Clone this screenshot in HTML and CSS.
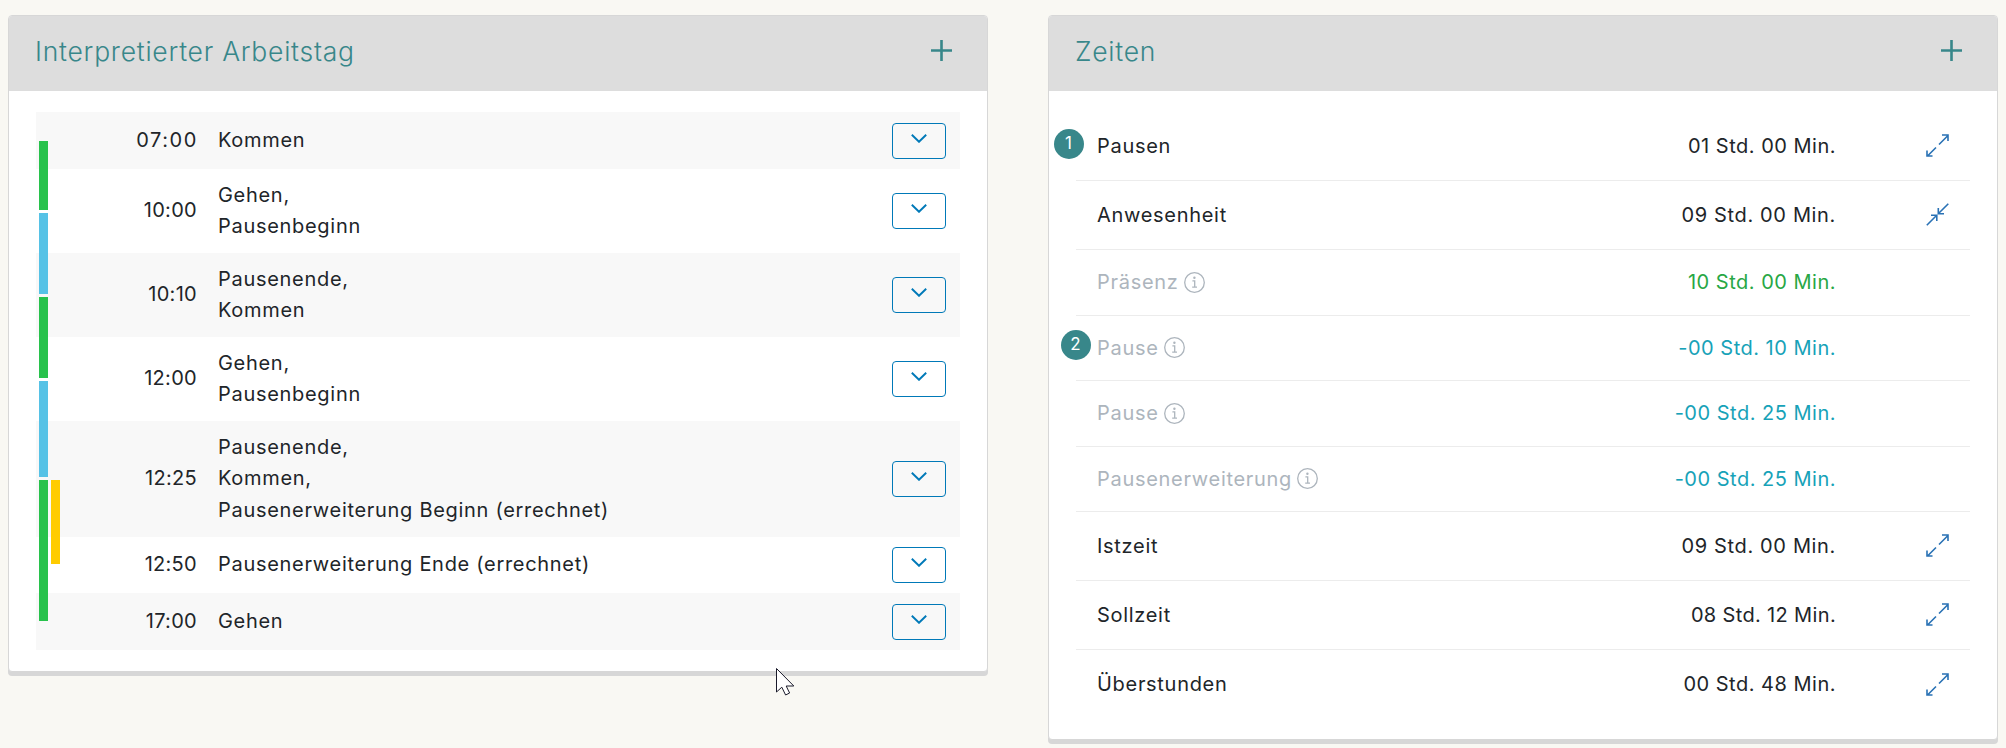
FILE: index.html
```html
<!DOCTYPE html>
<html lang="de">
  <head>
    <meta charset="UTF-8" />
    <meta name="viewport" content="width=device-width, initial-scale=1.0" />
    <title>Arbeitstag</title>
    <link rel="stylesheet" href="styles.css">
  </head>
  <body>
    <svg class="defs">
      <symbol id="plus" viewBox="0 0 21 21">
        <path d="M10.5 0v21M0 10.5h21" />
      </symbol>
      <symbol id="chevron" viewBox="0 0 16 9">
        <path d="M0.8 0.8L8 7.8L15.2 0.8" />
      </symbol>
      <symbol id="expand" viewBox="0 0 23 23">
        <path d="M13 10.5L21.5 2M16 1H22V7M10 13.5L1.5 22M1 16.5V22H6.5" />
      </symbol>
      <symbol id="collapse" viewBox="0 0 23 23">
        <path d="M22.3 0.7L13 10M12.3 5V10.7H18M0.8 22.2L10 13M5 12.3H10.8V18" />
      </symbol>
      <symbol id="info" viewBox="0 0 21 21">
        <circle cx="10.5" cy="10.5" r="9.8" />
        <path d="M8.4 8.9H10.7V15M8.2 15.1H13" />
        <circle class="dot" cx="10.4" cy="5.7" r="1.2" />
      </symbol>
    </svg>

    <div class="page">
      <section class="card day">
        <header class="card-header">
          <h2>Interpretierter Arbeitstag</h2>
          <svg class="plus"><use href="#plus" /></svg>
        </header>
        <div class="card-body">
          <div class="entries">
            <div class="entry">
              <span class="time wide">07:00</span>
              <p>Kommen</p>
              <button><svg><use href="#chevron" /></svg></button>
            </div>
            <div class="entry double">
              <span class="time">10:00</span>
              <p>Gehen,<br />Pausenbeginn</p>
              <button><svg><use href="#chevron" /></svg></button>
            </div>
            <div class="entry double">
              <span class="time">10:10</span>
              <p>Pausenende,<br />Kommen</p>
              <button><svg><use href="#chevron" /></svg></button>
            </div>
            <div class="entry double">
              <span class="time">12:00</span>
              <p>Gehen,<br />Pausenbeginn</p>
              <button><svg><use href="#chevron" /></svg></button>
            </div>
            <div class="entry triple">
              <span class="time">12:25</span>
              <p>Pausenende,<br />Kommen,<br />Pausenerweiterung Beginn (errechnet)</p>
              <button><svg><use href="#chevron" /></svg></button>
            </div>
            <div class="entry short">
              <span class="time">12:50</span>
              <p>Pausenerweiterung Ende (errechnet)</p>
              <button><svg><use href="#chevron" /></svg></button>
            </div>
            <div class="entry">
              <span class="time">17:00</span>
              <p>Gehen</p>
              <button><svg><use href="#chevron" /></svg></button>
            </div>

            <!-- coloured bars running over the rows -->
            <div class="bars">
              <div class="bar work" style="height: 69px"></div>
              <div class="bar pause" style="height: 81px"></div>
              <div class="bar work" style="height: 81px"></div>
              <div class="bar pause" style="height: 96px"></div>
              <div class="bar work" style="height: 141px"></div>
            </div>
            <div class="bar extension"></div>
          </div>
        </div>
      </section>

      <section class="card times">
        <header class="card-header">
          <h2>Zeiten</h2>
          <svg class="plus"><use href="#plus" /></svg>
        </header>
        <div class="card-body">
          <div class="row">
            <span class="badge first">1</span>
            <span class="label">Pausen</span>
            <span class="value">01 Std. 00 Min.</span>
            <svg class="toggle"><use href="#expand" /></svg>
          </div>
          <div class="row">
            <span class="label">Anwesenheit</span>
            <span class="value wide">09 Std. 00 Min.</span>
            <svg class="toggle"><use href="#collapse" /></svg>
          </div>
          <div class="row sub tall">
            <span class="label">Präsenz</span>
            <svg class="info"><use href="#info" /></svg>
            <span class="value green">10 Std. 00 Min.</span>
          </div>
          <div class="row sub">
            <span class="badge second">2</span>
            <span class="label">Pause</span>
            <svg class="info"><use href="#info" /></svg>
            <span class="value blue">-00 Std. 10 Min.</span>
          </div>
          <div class="row sub tall">
            <span class="label">Pause</span>
            <svg class="info"><use href="#info" /></svg>
            <span class="value blue">-00 Std. 25 Min.</span>
          </div>
          <div class="row sub">
            <span class="label">Pausenerweiterung</span>
            <svg class="info"><use href="#info" /></svg>
            <span class="value blue">-00 Std. 25 Min.</span>
          </div>
          <div class="row">
            <span class="label">Istzeit</span>
            <span class="value wide">09 Std. 00 Min.</span>
            <svg class="toggle"><use href="#expand" /></svg>
          </div>
          <div class="row">
            <span class="label">Sollzeit</span>
            <span class="value narrow">08 Std. 12 Min.</span>
            <svg class="toggle"><use href="#expand" /></svg>
          </div>
          <div class="row">
            <span class="label">Überstunden</span>
            <span class="value">00 Std. 48 Min.</span>
            <svg class="toggle"><use href="#expand" /></svg>
          </div>
        </div>
      </section>
    </div>

    <svg class="cursor" viewBox="0 0 19 28">
      <path d="M0.5 0.5V24L5.8 19.2L9.6 27L13.6 25L10.2 18H17.8Z" />
    </svg>
  </body>
</html>
```
FILE: styles.css
```css
* {
  box-sizing: border-box;
}
body {
  margin: 0;
  height: 748px;
  overflow: hidden;
  background-color: #f9f8f3;
  font-family: Inter, "Open Sans", sans-serif;
  font-size: 20px;
  line-height: 31.25px;
  letter-spacing: 0.7px;
  color: #212529;
}
svg {
  fill: none;
  flex-shrink: 0;
}
.defs {
  display: none;
}
.page {
  display: flex;
  align-items: flex-start;
  gap: 60px;
  padding: 15px 8px;
}
.card {
  background-color: white;
  border: 1px solid #d7d7d7;
  border-radius: 4px;
  box-shadow: 0 4px 0 #d7d7d7;
}
.day {
  width: 980px;
  height: 657px;
}
.times {
  width: 950px;
  height: 725px;
}
.card-header {
  display: flex;
  align-items: center;
  justify-content: space-between;
  height: 75px;
  padding: 0 35px 6px 26px;
  background-color: #ddd;
  border-radius: 3px 3px 0 0;
}
h2 {
  margin: 0;
  padding-top: 3px;
  font-size: 26.5px;
  font-weight: 350;
  letter-spacing: 0.75px;
  color: #38878a;
}
.plus {
  width: 21px;
  height: 21px;
  stroke: #38878a;
  stroke-width: 2.6;
}
.card-body {
  padding: 21px 27px 0;
}

/* left card */
.entries {
  position: relative;
}
.entry {
  display: flex;
  align-items: center;
  height: 57px;
  padding-right: 14px;
}
.entry:nth-child(odd) {
  background-color: #f8f8f8;
}
.entry.short {
  height: 56px;
}
.entry.double {
  height: 84px;
}
.entry.triple {
  height: 116px;
}
.time {
  width: 161px;
  text-align: right;
  letter-spacing: 0.3px;
}
.time.wide {
  width: 162px;
  margin-right: -1px;
  letter-spacing: 1.6px;
}
.entry p {
  flex: 1;
  margin: 0 0 0 21px;
}
button {
  display: flex;
  justify-content: center;
  width: 54px;
  height: 36px;
  padding: 10px 0 0;
  border: 1px solid #0079b8;
  border-radius: 4px;
  background: transparent;
}
button svg {
  width: 16px;
  height: 9px;
  stroke: #0079b8;
  stroke-width: 1.9;
}
.bars {
  position: absolute;
  top: 29px;
  left: 3px;
  display: flex;
  flex-direction: column;
  gap: 3px;
}
.bar {
  width: 9px;
}
.work {
  background-color: #28c24c;
}
.pause {
  background-color: #56c2e6;
}
.extension {
  position: absolute;
  top: 368px;
  left: 15px;
  height: 84px;
  background-color: #fc0;
}

/* right card */
.row {
  position: relative;
  display: flex;
  align-items: center;
  height: 69px;
  padding-left: 21px;
  padding-right: 21px;
  border-bottom: 1px solid #ececec;
}
.row:last-child {
  border-bottom: none;
}
.sub {
  height: 65px;
}
.sub.tall {
  height: 66px;
}
.label,
.value {
  padding-top: 1px;
}
.sub .label {
  color: #adb5bd;
}
.value {
  margin-left: auto;
  margin-right: 90px;
  letter-spacing: 0.5px;
}
.value.wide {
  letter-spacing: 0.65px;
}
.value.narrow {
  letter-spacing: 0.35px;
}
.sub .value {
  margin-right: 113px;
}
.green {
  color: #28a745;
}
.blue {
  color: #17a2b8;
}
.toggle {
  width: 23px;
  height: 23px;
  margin-bottom: 1px;
  stroke: #2a72b5;
  stroke-width: 1.6;
}
.info {
  width: 21px;
  height: 21px;
  margin-left: 5px;
  margin-bottom: 1px;
  stroke: #adb5bd;
  stroke-width: 1.3;
}
.dot {
  fill: #adb5bd;
  stroke: none;
}
.badge {
  position: absolute;
  width: 30px;
  height: 30px;
  border-radius: 50%;
  background-color: #38878a;
  color: white;
  font-size: 17px;
  line-height: 29px;
  letter-spacing: 0;
  text-align: center;
}
.badge.first {
  top: 17px;
  left: -22.5px;
}
.badge.second {
  top: 14px;
  left: -15.5px;
}
.cursor {
  position: absolute;
  left: 776px;
  top: 668px;
  width: 19px;
  height: 28px;
  fill: white;
  stroke: #1a1a2a;
}
```
